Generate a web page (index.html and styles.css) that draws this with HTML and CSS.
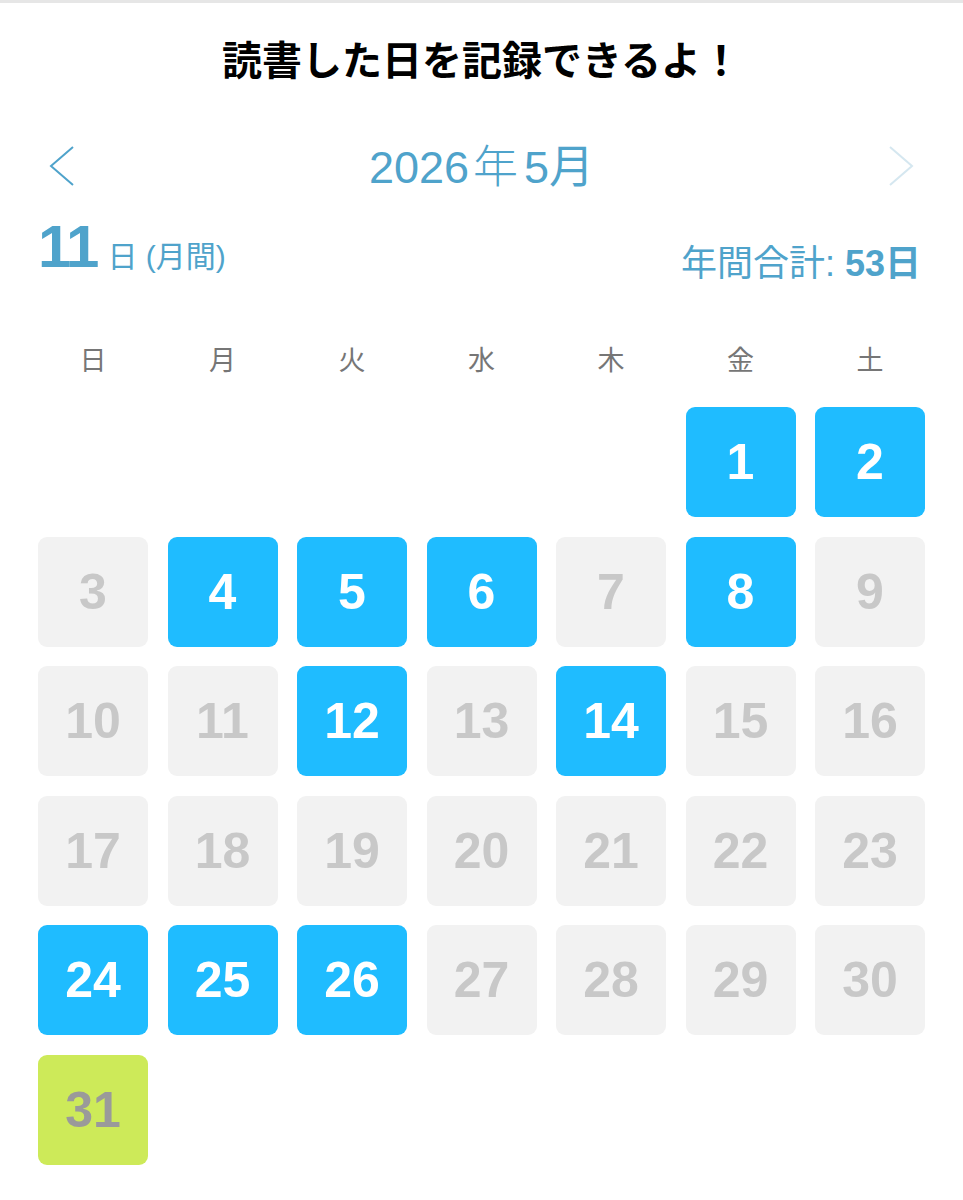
FILE: index.html
```html
<!DOCTYPE html>
<html lang="ja">
<head>
<meta charset="utf-8">
<link rel="stylesheet" href="styles.css">
</head>
<body>
<div class="page">
  <h1 class="title">読書した日を記録できるよ！</h1>
  <div class="nav">
    <svg class="chev" width="28" height="40" viewBox="0 0 28 40"><polyline points="25,1 3,20 25,39" fill="none" stroke="#4fa3cb" stroke-width="2"/></svg>
    <div class="month">2026<span class="nen">年</span>5月</div>
    <svg class="chev" width="28" height="40" viewBox="0 0 28 40"><polyline points="3,1 25,20 3,39" fill="none" stroke="#d5e7f0" stroke-width="2"/></svg>
  </div>
  <div class="summary">
    <div class="monthly"><span class="big">11</span><span class="unit">日 (月間)</span></div>
    <div class="yearly">年間合計: <b>53日</b></div>
  </div>
  <div class="weekdays">
    <span>日</span><span>月</span><span>火</span><span>水</span><span>木</span><span>金</span><span>土</span>
  </div>
  <div class="grid">
    <div class="cell empty"></div><div class="cell empty"></div><div class="cell empty"></div><div class="cell empty"></div><div class="cell empty"></div>
    <div class="cell on">1</div><div class="cell on">2</div>
    <div class="cell">3</div><div class="cell on">4</div><div class="cell on">5</div><div class="cell on">6</div><div class="cell">7</div><div class="cell on">8</div><div class="cell">9</div>
    <div class="cell">10</div><div class="cell">11</div><div class="cell on">12</div><div class="cell">13</div><div class="cell on">14</div><div class="cell">15</div><div class="cell">16</div>
    <div class="cell">17</div><div class="cell">18</div><div class="cell">19</div><div class="cell">20</div><div class="cell">21</div><div class="cell">22</div><div class="cell">23</div>
    <div class="cell on">24</div><div class="cell on">25</div><div class="cell on">26</div><div class="cell">27</div><div class="cell">28</div><div class="cell">29</div><div class="cell">30</div>
    <div class="cell today">31</div>
  </div>
</div>
</body>
</html>
```
FILE: styles.css
```css
html, body {
  margin: 0;
  padding: 0;
  background: #fff;
}
body {
  font-family: "Liberation Sans", "Noto Sans CJK JP", sans-serif;
}
.page {
  border-top: 3px solid #e6e6e6;
  padding: 0 38px;
}
.title {
  margin: 0;
  padding-top: 34px;
  height: 42px;
  line-height: 42px;
  text-align: center;
  font-family: "Noto Sans CJK JP", sans-serif;
  font-size: 40px;
  font-weight: 700;
  color: #000;
  letter-spacing: 0;
}
.nav {
  margin-top: 62px;
  height: 50px;
  display: flex;
  align-items: center;
  justify-content: space-between;
  padding: 0 10px 0 10px;
}
.month {
  font-family: "Liberation Sans", "Noto Sans CJK JP", sans-serif;
  font-size: 45px;
  color: #4fa3cb;
  line-height: 50px;
}
.nen {
  font-family: "Noto Sans CJK JP", sans-serif;
  font-weight: 300;
  margin: 0 6px 0 4px;
}
.summary {
  margin-top: 13px;
  height: 80px;
  display: flex;
  justify-content: space-between;
  align-items: flex-end;
  color: #4fa3cb;
}
.monthly {
  display: flex;
  align-items: baseline;
  padding-bottom: 7px;
}
.big {
  font-size: 60px;
  font-weight: 700;
  line-height: 60px;
  letter-spacing: -2px;
  margin-right: 10px;
}
.unit {
  font-family: "Liberation Sans", "Noto Sans CJK JP", sans-serif;
  font-size: 30px;
}
.yearly {
  font-family: "Liberation Sans", "Noto Sans CJK JP", sans-serif;
  font-size: 36px;
  line-height: 40px;
  padding-bottom: 0;
  margin-right: 4px;
}
.yearly b {
  font-weight: 700;
}
.weekdays {
  margin-top: 51px;
  display: grid;
  grid-template-columns: repeat(7, 110px);
  column-gap: 19.5px;
  height: 46px;
  align-items: center;
  font-family: "Noto Sans CJK JP", sans-serif;
  font-size: 27px;
  color: #767676;
  text-align: center;
}
.grid {
  margin-top: 26px;
  display: grid;
  grid-template-columns: repeat(7, 110px);
  grid-auto-rows: 110px;
  gap: 19.5px;
}
.cell {
  border-radius: 9px;
  background: #f2f2f2;
  color: #c8c8c8;
  display: flex;
  align-items: center;
  justify-content: center;
  font-family: "Liberation Sans", sans-serif;
  font-weight: 700;
  font-size: 50px;
}
.cell.empty {
  background: transparent;
}
.cell.on {
  background: #1fbcff;
  color: #fff;
}
.cell.today {
  background: #cdea59;
  color: #9a9a9a;
}
```
